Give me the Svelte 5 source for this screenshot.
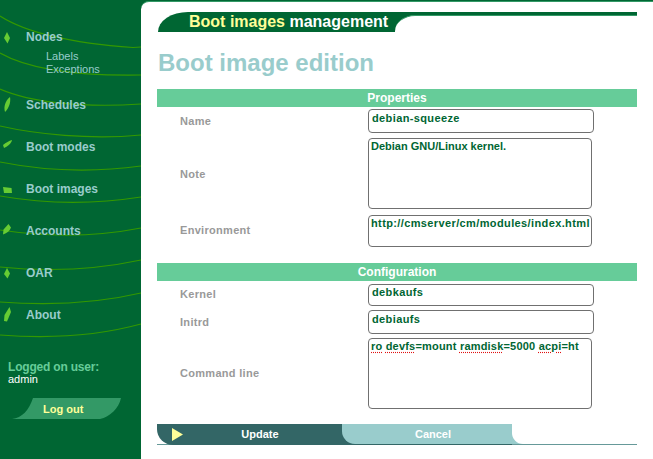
<script>
  const curves = [
    'M0 16C25 32 70 43 133 47.5L141 47',
    'M0 53C30 70 80 76 141 75',
    'M0 89C30 102 80 108 141 104',
    'M0 126C35 134 90 140 141 135',
    'M0 162C40 170 90 173 141 166',
    'M0 196C40 203 90 205 141 197',
    'M0 230C40 236 90 238 141 228',
    'M0 267C40 271 90 271 141 260',
    'M0 302C40 305 90 305 141 293',
    'M0 335C40 338 90 338 141 324'
  ];
  const menu = [
    { label: 'Nodes', leaf: 'M7 2L10 8L7.5 13.5L4 8Z', sub: ['Labels', 'Exceptions'] },
    { label: 'Schedules', leaf: 'M10 -1C11 4 9 10 5 14C3.5 9 5 3 10 -1Z' },
    { label: 'Boot modes', leaf: 'M12 0C11.5 3 8 6.5 4 8L3 5C6 2.5 9 1 12 0Z' },
    { label: 'Boot images', leaf: 'M3 5L11.5 6L12 11L4 11Z' },
    { label: 'Accounts', leaf: 'M8.5 0L11 3.5C10 7 7 9 3 10.5L3.5 5.5Z' },
    { label: 'OAR', leaf: 'M7 2L10 7.5L7.5 12.5L4 8Z' },
    { label: 'About', leaf: 'M9.5 -1L11 4L7 13.5L4 13L4.5 7Z' }
  ];
</script>

<div class="page">
  <aside class="side">
    <svg class="curves" width="141" height="345" viewBox="0 0 141 345" aria-hidden="true">
      {#each curves as d}<path {d} />{/each}
    </svg>
    <nav class="nav">
      {#each menu as item}
        <div class="entry">
          <div class="top">
            <svg class="leaf" width="14" height="14" viewBox="0 0 14 14" aria-hidden="true"><path d={item.leaf} /></svg>
            <span>{item.label}</span>
          </div>
          {#if item.sub}
            <div class="sub">
              {#each item.sub as s}<div>{s}</div>{/each}
            </div>
          {/if}
        </div>
      {/each}
    </nav>
    <div class="user">
      <div class="logged">Logged on user:</div>
      <div class="who">admin</div>
    </div>
    <div class="logout"><span>Log out</span></div>
  </aside>

  <main class="main">
    <div class="tabbar">
      <div class="tab"><span class="hi">Boot images</span> management</div>
      <div class="tabrest"><div class="tabcut"></div></div>
    </div>
    <h1>Boot image edition</h1>

    <div class="bar">Properties</div>
    <div class="rows">
      <div class="row name">
        <div class="lab">Name</div>
        <div class="field tall wide inset sp-wide">debian-squeeze</div>
      </div>
      <div class="row">
        <div class="lab down">Note</div>
        <div class="field area">Debian GNU/Linux kernel.</div>
      </div>
      <div class="row">
        <div class="lab up">Environment</div>
        <div class="field f-env sp-wide">http://cmserver/cm/modules/index.html</div>
      </div>
    </div>

    <div class="bar second">Configuration</div>
    <div class="rows">
      <div class="row kernel">
        <div class="lab up">Kernel</div>
        <div class="field f-short wide inset sp-wide">debkaufs</div>
      </div>
      <div class="row initrd">
        <div class="lab">Initrd</div>
        <div class="field tall wide inset sp-wide">debiaufs</div>
      </div>
      <div class="row">
        <div class="lab">Command line</div>
        <div class="field area sp-mid"><span class="sp">ro</span> <span class="sp">devfs</span>=mount <span class="sp">ramdisk</span>=5000 <span class="sp">acpi</span>=ht</div>
      </div>
    </div>

    <div class="actions">
      <div class="update"><svg class="play" width="11" height="13" viewBox="0 0 11 13" aria-hidden="true"><path d="M0 0L11 6.5L0 13Z" /></svg><span>Update</span></div>
      <div class="cancelwrap"><div class="cancel">Cancel</div></div>
      <div class="restwrap"><div class="rest"></div></div>
    </div>
  </main>
</div>

<style>
  :global(body) {
    margin: 0;
    background: #006633;
  }
  .page {
    display: flex;
    width: 653px;
    height: 459px;
    overflow: hidden;
    font-family: "Liberation Sans", Arial, sans-serif;
    font-size: 11px;
  }
  .side {
    position: relative;
    flex: 0 0 141px;
    background: #006633;
    padding-top: 30px;
    box-sizing: border-box;
  }
  .curves {
    position: absolute;
    left: 0;
    top: 0;
  }
  .curves path {
    fill: none;
    stroke: #339900;
    stroke-width: 1.2;
  }
  .nav {
    position: relative;
    display: flex;
    flex-direction: column;
    gap: 28px;
  }
  .top {
    display: flex;
    align-items: center;
    height: 14px;
    color: #99cccc;
    font-size: 12px;
    font-weight: bold;
    line-height: 14px;
  }
  .leaf {
    flex: none;
    margin-right: 12px;
    overflow: visible;
  }
  .leaf path {
    fill: #66cc33;
  }
  .sub {
    margin-top: 6px;
    margin-bottom: -6px;
    padding-left: 46px;
    color: #99cccc;
    line-height: 13px;
  }
  .user {
    position: relative;
    margin-top: 38px;
    padding-left: 8px;
  }
  .logged {
    color: #66cc99;
    font-size: 12px;
    font-weight: bold;
    line-height: 14px;
    letter-spacing: -0.2px;
  }
  .who {
    margin-top: -1px;
    color: #fff;
    line-height: 13px;
  }
  .logout {
    position: relative;
    display: flex;
    align-items: center;
    box-sizing: border-box;
    width: 109px;
    height: 21px;
    margin: 12px 0 0 12px;
    padding-left: 31px;
    background: #339966;
    clip-path: path("M21 0L109 0C107 10 98 19 88 21L0 21C10 20 17 12 21 0Z");
    color: #ffff99;
    font-weight: bold;
  }

  .main {
    flex: 1;
    margin-top: 1px;
    padding: 10px 16px 0 16px;
    background: #fff;
    border-top: 1px solid #339966;
    border-top-left-radius: 8px;
    min-width: 0;
  }
  .tabbar {
    display: flex;
    height: 20px;
    margin-left: 1px;
  }
  .tab {
    padding: 0 7px 0 31px;
    background: #006633;
    border-top-left-radius: 30px 20px;
    color: #fff;
    font-size: 16px;
    font-weight: bold;
    line-height: 20px;
    white-space: nowrap;
  }
  .hi {
    color: #ffff99;
  }
  .tabrest {
    flex: 1;
    background: #006633;
  }
  .tabcut {
    box-sizing: border-box;
    height: 17px;
    margin-top: 3px;
    background: #fff;
    border-top: 1px solid #339966;
    border-top-left-radius: 20px 16px;
  }
  h1 {
    margin: 17px 0 12px 1px;
    color: #99cccc;
    font-size: 24px;
    font-weight: bold;
    line-height: 28px;
  }
  .bar {
    height: 18px;
    background: #66cc99;
    color: #fff;
    font-size: 12px;
    font-weight: bold;
    line-height: 18px;
    text-align: center;
  }
  .bar.second {
    margin-top: 16px;
  }
  .rows {
    display: flex;
    flex-direction: column;
    gap: 6px;
    padding-top: 2px;
  }
  .bar.second + .rows {
    padding-top: 3px;
  }
  .row {
    display: grid;
    grid-template-columns: 211px auto;
    align-items: center;
    justify-items: start;
  }
  .name {
    margin-bottom: -1px;
  }
  .kernel,
  .initrd {
    margin-bottom: -2px;
  }
  .lab {
    padding-left: 23px;
    color: #999;
    font-weight: bold;
    line-height: 13px;
    letter-spacing: 0.3px;
  }
  .down {
    margin-top: 2px;
  }
  .up {
    margin-top: -2px;
  }
  .field {
    box-sizing: border-box;
    width: 224px;
    padding: 1px 0 0 2px;
    background: #fff;
    border: 1.5px solid #707070;
    border-radius: 4px;
    color: #006633;
    font-weight: bold;
    line-height: 13px;
    white-space: nowrap;
    overflow: hidden;
  }
  .wide {
    width: 226px;
  }
  .inset {
    padding-left: 3px;
  }
  .tall {
    height: 24px;
    padding-top: 2px;
  }
  .f-short {
    height: 22px;
  }
  .f-env {
    height: 32px;
  }
  .area {
    height: 71px;
  }
  .sp-wide {
    letter-spacing: 0.38px;
  }
  .sp-mid {
    letter-spacing: 0.2px;
  }
  .sp {
    text-decoration: underline dotted #e01010;
    text-underline-offset: 2px;
  }
  .actions {
    display: flex;
    height: 20px;
    margin-top: 15px;
    border-bottom: 1px solid #669999;
    color: #fff;
    font-weight: bold;
    line-height: 20px;
  }
  .update {
    position: relative;
    flex: 0 0 185px;
    box-sizing: border-box;
    height: 21px;
    padding-left: 21px;
    background: #336666;
    border-bottom-left-radius: 16px;
    text-align: center;
  }
  .update span {
    display: block;
  }
  .play {
    position: absolute;
    left: 15px;
    top: 4px;
  }
  .play path {
    fill: #ffff99;
  }
  .cancelwrap {
    flex: 0 0 170px;
    background: #336666;
    height: 21px;
  }
  .cancel {
    box-sizing: border-box;
    height: 20px;
    padding-left: 12px;
    background: #99cccc;
    border-bottom-left-radius: 13px;
    text-align: center;
  }
  .restwrap {
    flex: 1;
    background: #99cccc;
    height: 20px;
  }
  .rest {
    height: 20px;
    background: #fff;
    border-bottom-left-radius: 11px;
  }
</style>
